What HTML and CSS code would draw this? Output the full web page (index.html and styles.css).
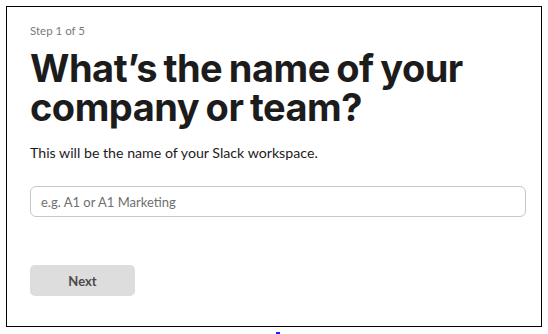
FILE: index.html
```html
<!DOCTYPE html>
<html lang="en">
<head>
<meta charset="utf-8">
<title>Step 1 of 5</title>
<link rel="stylesheet" href="styles.css">
</head>
<body>
<div class="frame">
  <div class="step">Step 1 of 5</div>
  <h1 class="title">What’s the name of your company or team?</h1>
  <p class="sub">This will be the name of your Slack workspace.</p>
  <div class="field"><span class="placeholder">e.g. A1 or A1 Marketing</span></div>
  <button class="next" type="button">Next</button>
</div>
<div class="mark"></div>
</body>
</html>
```
FILE: styles.css
```css
html, body { margin: 0; padding: 0; background: #fff; }
body { padding: 6px 0 0 6px; font-family: Lato, "Noto Sans", sans-serif; color: #1d1c1d; }
.frame {
  box-sizing: border-box;
  width: 536px;
  height: 321px;
  border: 1px solid #000;
  padding: 17px 17px 0 23px;
  display: flex;
  flex-direction: column;
  align-items: flex-start;
}
.step { font-size: 11.5px; color: #7a7a7a; line-height: 14px; }
.title {
  margin: 11px 0 0 0;
  font-family: Inter, sans-serif;
  font-weight: 700;
  font-size: 38px;
  line-height: 39px;
  letter-spacing: -0.5px;
  word-spacing: -2px;
  color: #1d1c1d;
  width: 470px;
}
.sub { margin: 17px 0 0 0; font-size: 14.2px; line-height: 18px; color: #1d1c1d; }
.field {
  box-sizing: border-box;
  margin-top: 24px;
  width: 496px;
  height: 31px;
  border: 1px solid #c8c8c8;
  border-radius: 6px;
  padding: 0 10px;
  display: flex;
  align-items: center;
}
.placeholder { font-size: 13px; color: #6f6f6f; }
.next {
  margin-top: 48px;
  width: 105px;
  height: 31px;
  border: none;
  border-radius: 5px;
  background: #dddddd;
  font-family: Lato, sans-serif;
  font-weight: 700;
  font-size: 13px;
  color: #4a4a4a;
}
.mark { margin: 5px 0 0 270px; width: 4px; height: 3px; background: #1a1aff; }
```
